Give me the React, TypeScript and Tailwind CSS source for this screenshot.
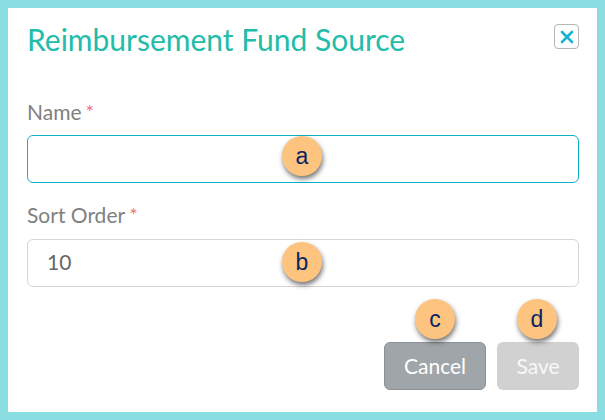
function Badge({ children, className }: { children: string; className: string }) {
  return (
    <div
      className={`absolute flex h-10 w-10 items-center justify-center rounded-full bg-[#fdc47f] text-[23px] leading-none text-[#0a2463] shadow-[1px_3px_5px_rgba(0,0,0,0.55)] ${className}`}
      style={{ fontFamily: '"Liberation Sans", Arial, sans-serif' }}
    >
      {children}
    </div>
  );
}

export default function App() {
  return (
    <div
      className="relative box-border flex h-[420px] w-[605px] flex-col border-8 border-[#8adde0] bg-white pl-[19px] pr-[18px]"
      style={{ fontFamily: 'Lato, sans-serif' }}
    >
      <div className="flex items-start justify-between pt-[13px]">
        <h1 className="text-[30px] leading-[36px] font-normal text-[#22bca8]">Reimbursement Fund Source</h1>
        <button className="mt-[3px] flex h-[25px] w-[25px] items-center justify-center rounded-[4px] border border-[#b5b5b5] bg-white">
          <svg width="14" height="14" viewBox="0 0 14 14" fill="none" stroke="#17b3d8" strokeWidth="2.6" strokeLinecap="round">
            <path d="M2 2 L12 12 M12 2 L2 12" />
          </svg>
        </button>
      </div>

      <label className="mt-[43px] flex h-[24px] items-center text-[21px] leading-[24px] text-[#808080]">
        Name<span className="ml-[4px] -translate-y-[1px] text-[20px] text-[#f4727c]">*</span>
      </label>
      <input className="mt-[11px] box-border h-[48px] w-full rounded-[6px] border border-[#0fb0c9] bg-white px-[19px] text-[21px] text-[#666666] outline-none" />

      <label className="mt-[20px] flex h-[24px] items-center text-[21px] leading-[24px] text-[#808080]">
        Sort Order<span className="ml-[4px] -translate-y-[1px] text-[20px] text-[#f4727c]">*</span>
      </label>
      <input
        readOnly
        value="10"
        className="mt-[12px] box-border h-[48px] w-full rounded-[6px] border border-[#d6d6d6] bg-white px-[19px] pb-[3px] text-[21px] text-[#666666] outline-none"
      />

      <div className="mt-[55px] flex justify-end gap-[11px]">
        <button className="box-border h-[48px] w-[102px] rounded-[6px] border border-[#8c9296] bg-[#9fa5a9] pb-[1px] text-[21px] text-white">Cancel</button>
        <button className="box-border h-[48px] w-[82px] rounded-[6px] bg-[#d1d1d1] pb-[1px] text-[21px] text-white/85">Save</button>
      </div>

      <Badge className="left-[274px] top-[128px]">a</Badge>
      <Badge className="left-[274px] top-[234px]">b</Badge>
      <Badge className="left-[407px] top-[291px]">c</Badge>
      <Badge className="left-[509px] top-[291px]">d</Badge>
    </div>
  );
}
